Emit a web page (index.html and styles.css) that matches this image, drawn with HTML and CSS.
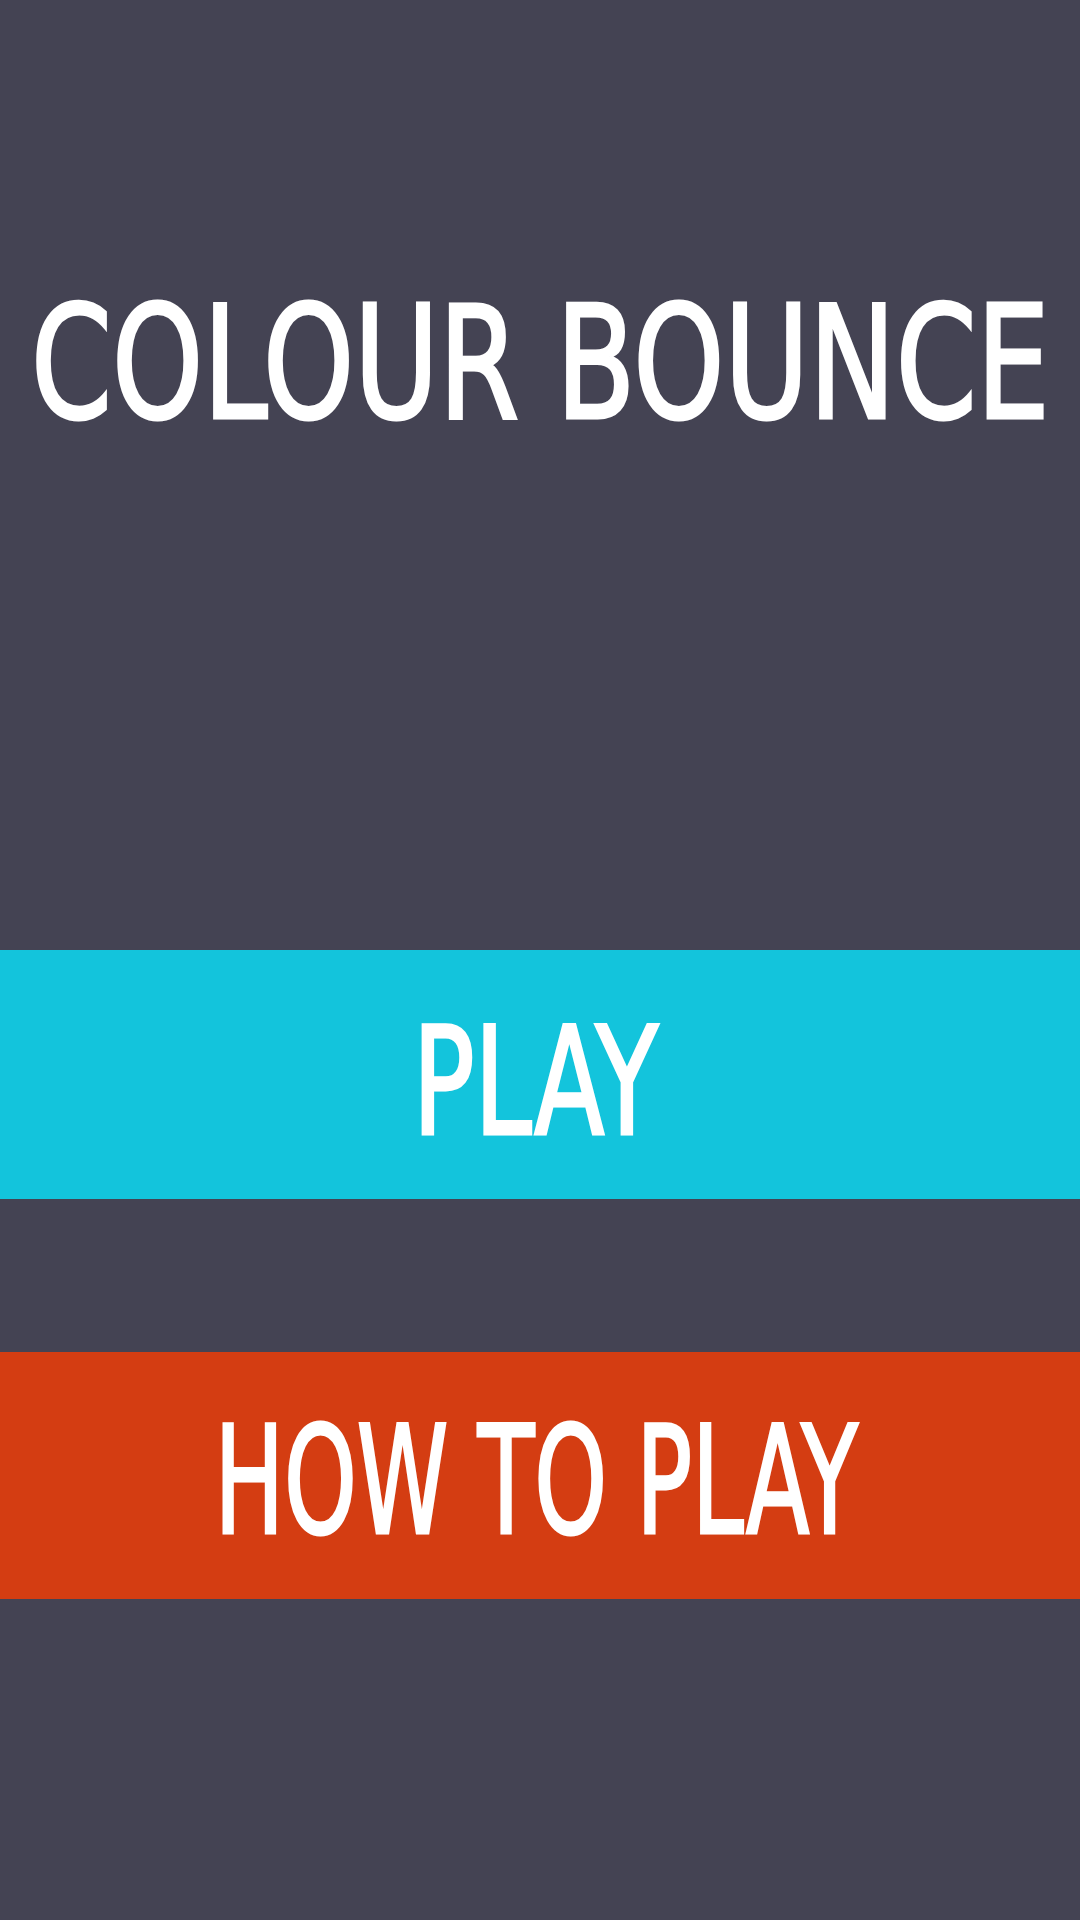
FILE: index.html
```html
<!DOCTYPE html>
<html>
<head>
<meta charset="utf-8">
<link rel="stylesheet" href="styles.css">
</head>
<body>
<main class="screen">
  <header class="hero">
    <h1 class="title"><span class="title-text">COLOUR BOUNCE</span></h1>
  </header>
  <button class="band band-play"><span class="band-text band-text-play">PLAY</span></button>
  <div class="spacer"></div>
  <button class="band band-how"><span class="band-text band-text-how">HOW TO PLAY</span></button>
</main>
</body>
</html>
```
FILE: styles.css
```css
html, body {
  margin: 0;
  padding: 0;
}
body {
  background: #444353;
  width: 1080px;
  height: 1920px;
  overflow: hidden;
  font-family: "DejaVu Sans Condensed", "DejaVu Sans", sans-serif;
  color: #ffffff;
}
.screen {
  display: flex;
  flex-direction: column;
  height: 1920px;
}
.hero {
  height: 950px;
  box-sizing: border-box;
  padding-top: 286px;
  display: flex;
  justify-content: center;
  align-items: flex-start;
  overflow: hidden;
}
.title {
  margin: 0;
  font-weight: 400;
  font-size: 156px;
  line-height: 1;
  white-space: nowrap;
  -webkit-text-stroke: 3px #ffffff;
}
.title-text {
  display: inline-block;
  transform: scaleX(0.825);
}
.band {
  display: flex;
  justify-content: center;
  align-items: center;
  width: 100%;
  height: 249px;
  box-sizing: border-box;
  border: 0;
  margin: 0;
  padding: 16px 0 0 0;
  font-family: inherit;
  color: #ffffff;
  font-size: 149px;
  line-height: 1;
  white-space: nowrap;
  -webkit-text-stroke: 3px #ffffff;
  overflow: hidden;
}
.band-text {
  display: inline-block;
}
.band-text-play {
  transform: translateX(-5px) scaleX(0.765);
}
.band-text-how {
  transform: translateX(-4px) scaleX(0.69);
}
.band-play {
  background: #13c4dc;
}
.spacer {
  height: 153px;
}
.band-how {
  background: #d43d12;
  height: 247px;
  padding-top: 12px;
}
```
